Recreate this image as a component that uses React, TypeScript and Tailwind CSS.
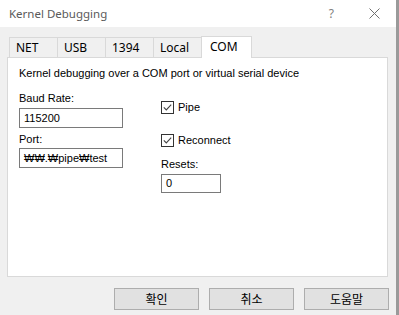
import React from 'react';

const ui = { fontFamily: '"Noto Sans", "Noto Sans CJK KR", sans-serif' };
const ms = { fontFamily: '"Liberation Sans", "Noto Sans CJK KR", sans-serif' };
const kr = { fontFamily: '"Noto Sans CJK KR", sans-serif' };

const tabs = ['NET', 'USB', '1394', 'Local'];

function Check({ label, className }: { label: string; className?: string }) {
  return (
    <div className={`flex items-center h-[13px] gap-[4px] ${className ?? ''}`}>
      <div className="w-[13px] h-[13px] border border-[#333333] bg-white flex items-center justify-center">
        <svg width="11" height="11" viewBox="0 0 11 11">
          <path d="M1.8 5.3 L4.3 7.9 L9.2 2.6" fill="none" stroke="#444444" strokeWidth="1.1" />
        </svg>
      </div>
      <span className="text-[11px] leading-[13px] text-black">{label}</span>
    </div>
  );
}

function Field({ value, className }: { value: string; className?: string }) {
  return (
    <div className={`border border-[#7a7a7a] bg-white flex items-center pl-[4px] text-[11px] text-black ${className ?? ''}`}>
      {value}
    </div>
  );
}

export default function App() {
  return (
    <div className="w-[399px] h-[315px] flex bg-[#f0f0f0] overflow-hidden">
      <div className="w-[396px] flex flex-col">
        <div className="h-[27px] bg-white flex items-center pl-[9px] pr-[16px] shrink-0" style={ui}>
          <span className="text-[11.5px] text-[#5a5a5a] flex-1">Kernel Debugging</span>
          <span className="text-[12px] text-[#808080] mr-[35px]">?</span>
          <svg width="11" height="11" viewBox="0 0 11 11">
            <path d="M0.5 0.5 L10.5 10.5 M10.5 0.5 L0.5 10.5" stroke="#707070" strokeWidth="1" />
          </svg>
        </div>

        <div className="flex items-end h-[22px] mt-[8px] pl-[9px]" style={ui}>
          {tabs.map((t) => (
            <div
              key={t}
              className="h-[20px] w-[48px] border-t border-l border-[#d9d9d9] flex items-center pl-[6px] text-[12px] text-black bg-[#f0f0f0]"
            >
              {t}
            </div>
          ))}
          <div className="h-[22px] w-[51px] border-t border-l border-r border-[#d9d9d9] bg-white flex items-start pt-[1px] pl-[8px] text-[12px] text-black -mb-[1px] relative z-10">
            COM
          </div>
        </div>

        <div className="ml-[7px] w-[381px] h-[220px] border border-[#d9d9d9] bg-white pl-[11px] pt-[9px]" style={ms}>
          <p className="text-[11px] leading-[13px] text-black">
            Kernel debugging over a COM port or virtual serial device
          </p>
          <div className="flex mt-[12px]">
            <div className="w-[104px] flex flex-col">
              <span className="text-[11px] leading-[13px] text-black">Baud Rate:</span>
              <Field value="115200" className="mt-[3px] h-[20px]" />
              <span className="text-[11px] leading-[13px] text-black mt-[5px]">Port:</span>
              <Field value="₩₩.₩pipe₩test" className="mt-[2px] h-[20px]" />
            </div>
            <div className="ml-[38px] flex flex-col">
              <Check label="Pipe" className="mt-[9px]" />
              <Check label="Reconnect" className="mt-[20px]" />
              <span className="text-[11px] leading-[13px] text-black mt-[11px]">Resets:</span>
              <Field value="0" className="mt-[3px] h-[19px] w-[60px]" />
            </div>
          </div>
        </div>

        <div className="flex justify-end gap-[10px] pr-[7px] mt-[11px]" style={kr}>
          {['확인', '취소', '도움말'].map((b) => (
            <button
              key={b}
              className="w-[85px] h-[22px] bg-[#e1e1e1] border border-[#adadad] text-[12px] text-black flex items-center justify-center"
            >
              {b}
            </button>
          ))}
        </div>
      </div>
      <div className="w-[3px] bg-[#9a9a9a]" />
    </div>
  );
}
